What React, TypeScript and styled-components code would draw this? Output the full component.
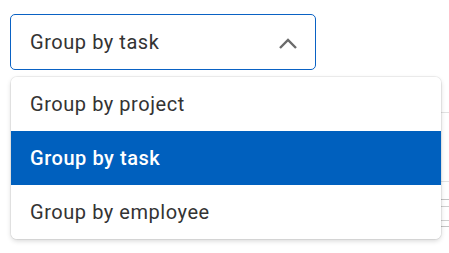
import { useState } from 'react'
import styled, { createGlobalStyle } from 'styled-components'

const options = ['Group by project', 'Group by task', 'Group by employee']

const GlobalStyle = createGlobalStyle`
  html, body {
    margin: 0;
    padding: 0;
    background: #ffffff;
    font-family: Roboto, "Liberation Sans", Arial, sans-serif;
  }
`

export default function App() {
  const [value, setValue] = useState('Group by task')

  return (
    <>
      <GlobalStyle />
      <Page>
        <SelectBox>
          <SelectText>{value}</SelectText>
          <Chevron viewBox="0 0 20 12" aria-hidden="true">
            <path d="M2 11 L10 3 L18 11" />
          </Chevron>
        </SelectBox>
        <Backdrop>
          <BackRow $height={43} />
          <BackRow $height={69} />
          <BackRow $height={18} $dark />
          <BackRow $height={27} $dark>
            <BackCell />
          </BackRow>
        </Backdrop>
        <Menu>
          {options.map((o) => (
            <Option key={o} $selected={o === value} onClick={() => setValue(o)}>
              {o}
            </Option>
          ))}
        </Menu>
      </Page>
    </>
  )
}

const Page = styled.div`
  position: relative;
  width: 449px;
  height: 253px;
  padding-top: 14px;
  box-sizing: border-box;
  overflow: hidden;
`

const SelectBox = styled.div`
  display: flex;
  align-items: center;
  justify-content: space-between;
  width: 306px;
  height: 56px;
  margin-left: 10px;
  box-sizing: border-box;
  padding: 0 17px 0 19px;
  border: 1px solid #0a62c4;
  border-radius: 5px;
  background: #fff;
`

const SelectText = styled.span`
  font-size: 20px;
  color: #333;
  letter-spacing: 0.55px;
`

const Chevron = styled.svg`
  width: 20px;
  height: 12px;
  margin-top: 2px;

  path {
    fill: none;
    stroke: #6b6b6b;
    stroke-width: 2.4;
  }
`

const Backdrop = styled.div`
  display: flex;
  flex-direction: column;
  margin-left: 60px;
`

const BackRow = styled.div<{ $height: number; $dark?: boolean }>`
  display: flex;
  align-items: center;
  justify-content: flex-end;
  height: ${(p) => p.$height}px;
  box-sizing: border-box;
  border-bottom: 1px solid ${(p) => (p.$dark ? '#c4c4c4' : '#e2e2e2')};
`

const BackCell = styled.div`
  width: 10px;
  height: 13px;
  margin-right: -2px;
  border: 1px solid #cfcfcf;
  border-radius: 2px;
`

const Menu = styled.div`
  position: absolute;
  left: 11px;
  top: 77px;
  width: 430px;
  background: #fff;
  border-radius: 6px;
  overflow: hidden;
  box-shadow: 0 0 0 1px rgba(0, 0, 0, 0.06), 0 2px 5px rgba(0, 0, 0, 0.16);
`

const Option = styled.div<{ $selected: boolean }>`
  display: flex;
  align-items: center;
  height: 54px;
  padding-left: 19px;
  font-size: 20px;
  letter-spacing: 0.55px;
  font-weight: ${(p) => (p.$selected ? 500 : 400)};
  color: ${(p) => (p.$selected ? '#fff' : '#333')};
  background: ${(p) => (p.$selected ? '#0060be' : '#fff')};
  cursor: pointer;
`
